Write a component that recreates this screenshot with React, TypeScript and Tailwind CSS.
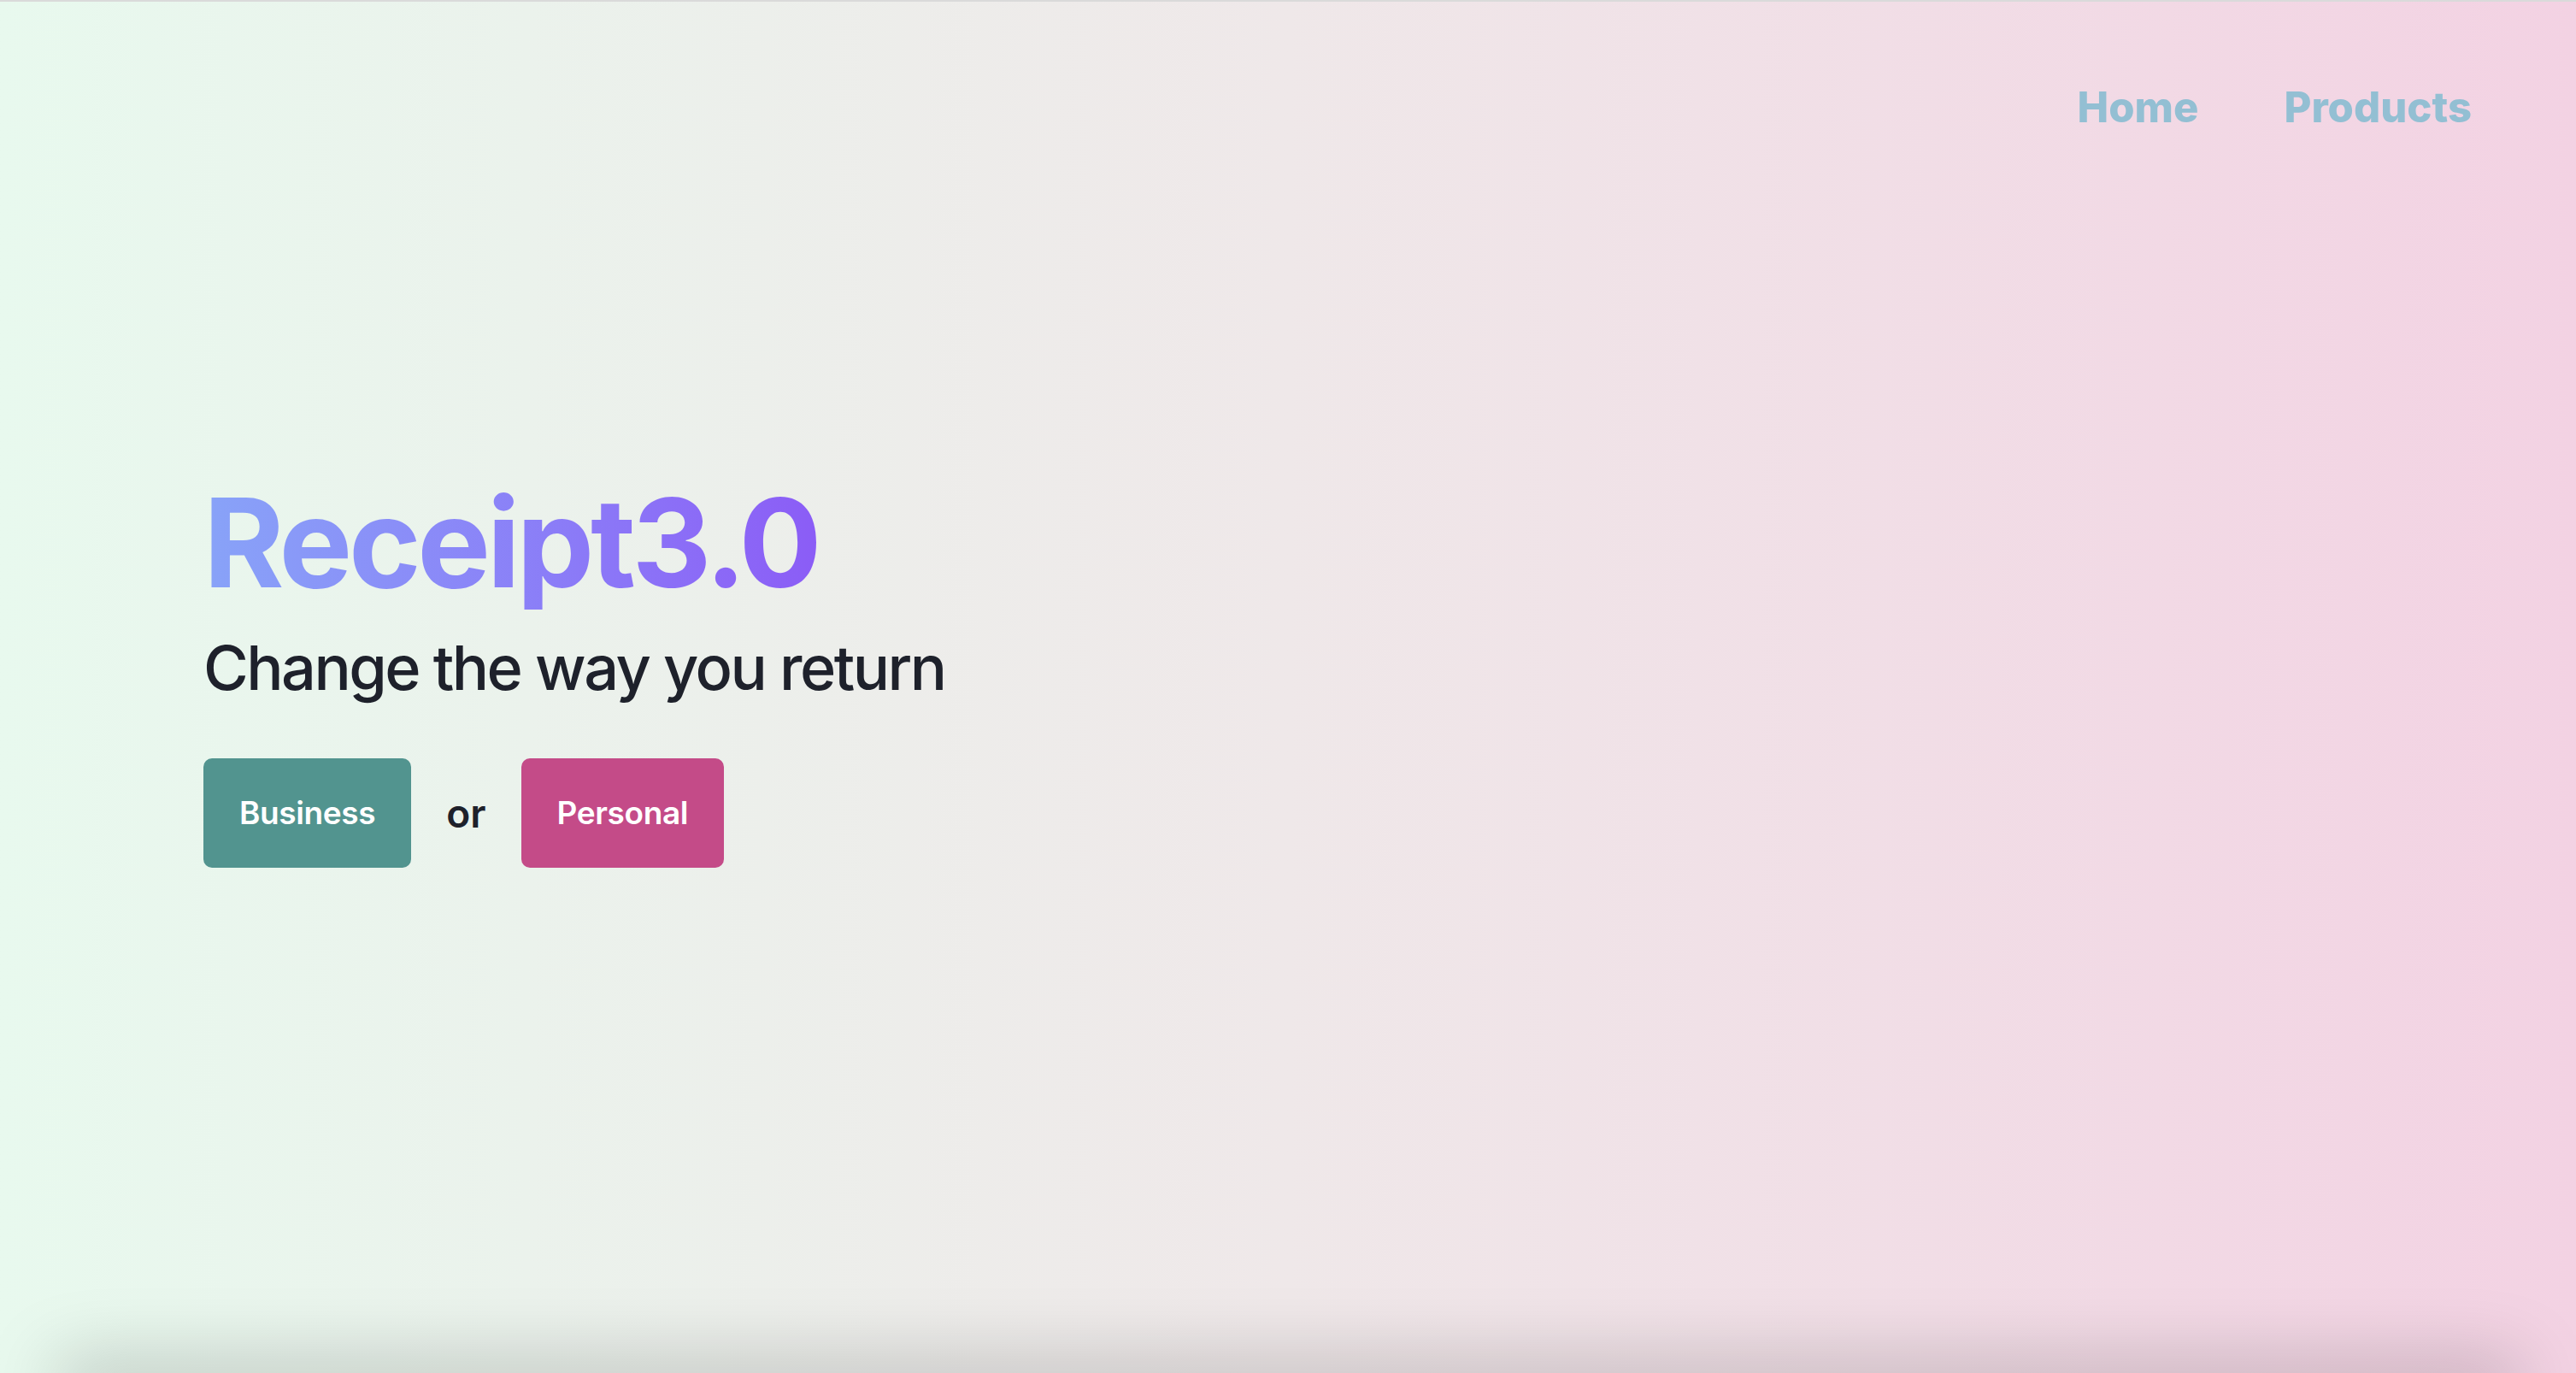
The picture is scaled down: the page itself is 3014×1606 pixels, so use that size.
const navLinks = ['Home', 'Products'];

const App = () => {
  return (
    <div
      className="relative flex h-[1606px] w-full flex-col overflow-hidden border-t-2 border-[#dadada] bg-gradient-to-r from-[#e8f9ee] via-[#efe8e9] to-[#f3d2e3]"
      style={{ fontFamily: 'Inter, "Noto Sans", sans-serif' }}>
      <nav className="flex justify-end gap-[100px] pt-[99px] pr-[122px]">
        {navLinks.map(link => (
          <a key={link} href="#" className="text-[49px] leading-none font-extrabold text-[#93bfd3]">
            {link}
          </a>
        ))}
      </nav>

      <main className="flex flex-col items-start pt-[413px] pl-[238px]">
        <h1 className="bg-gradient-to-r from-[#88a3f8] to-[#8b5cf6] bg-clip-text pb-[6px] text-[144px] leading-none font-bold tracking-[-0.03em] text-transparent">
          Receipt3.0
        </h1>
        <h2 className="mt-[32px] text-[72px] leading-none font-medium tracking-[-0.035em] text-[#1e212b]">
          Change the way you return
        </h2>

        <div className="mt-[70px] flex items-center gap-[41px]">
          <button className="rounded-[10px] bg-[#52948f] px-[42px] py-[36px] text-[37px] leading-[56px] font-semibold tracking-[-0.01em] text-white">
            Business
          </button>
          <span className="text-[46px] font-semibold text-[#1e212b]">or</span>
          <button className="rounded-[10px] bg-[#c44b88] px-[42px] py-[36px] text-[37px] leading-[56px] font-semibold tracking-[-0.01em] text-white">
            Personal
          </button>
        </div>
      </main>

      {/* soft shadow along the bottom edge */}
      <div className="pointer-events-none absolute right-[2%] -bottom-[40px] left-[2%] h-[56px] rounded-full bg-black/20 blur-2xl" />
    </div>
  );
};

export default App;
